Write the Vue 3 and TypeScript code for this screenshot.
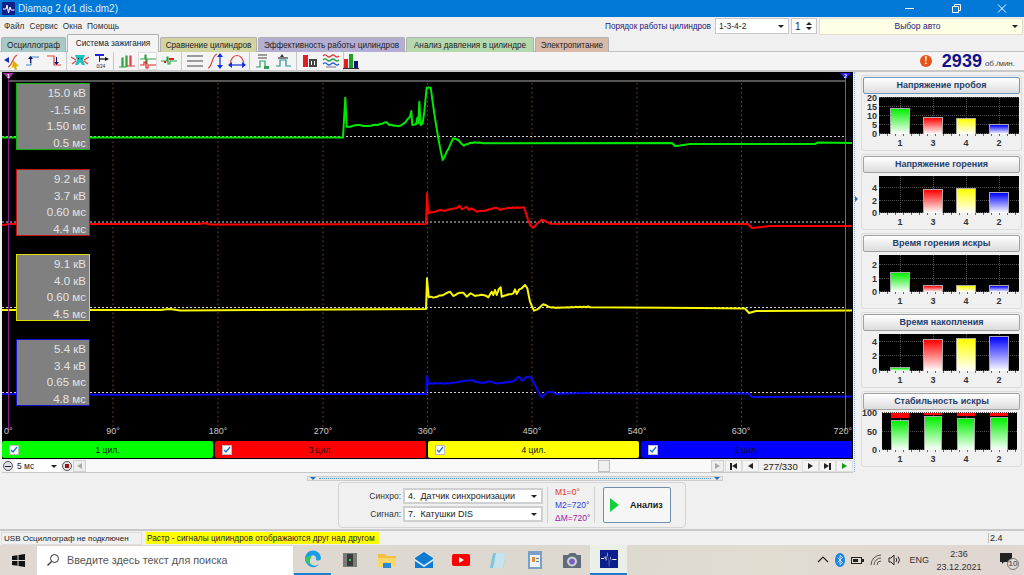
<template>
  <div class="app">
    <div class="titlebar">
      <svg class="app-icon" width="13" height="13" viewBox="0 0 13 13">
        <rect width="13" height="13" rx="1" fill="#10208a" />
        <path d="M1 7h3l1-4 1.500 8 1.500-6 1 3h3.500" fill="none" stroke="#fff" stroke-width="1" />
      </svg>
      <span class="title-text">Diamag 2 (к1 dis.dm2)</span>
      <div class="win-btns">
        <svg width="46" height="17" viewBox="0 0 46 17"><path d="M18 8.500h9" stroke="#fff" /></svg>
        <svg width="46" height="17" viewBox="0 0 46 17"><path d="M19.500 6.500h6v6h-6zM21.500 6.500v-2h6v6h-2" fill="none" stroke="#fff" /></svg>
        <svg width="46" height="17" viewBox="0 0 46 17"><path d="M19 4.500l8 8M27 4.500l-8 8" stroke="#fff" /></svg>
      </div>
    </div>

    <div class="menubar">
      <div class="menu-items">
        <span v-for="m in menu" :key="m">{{ m }}</span>
      </div>
      <span class="order-label">Порядок работы цилиндров</span>
      <div class="combo order-combo"><span>1-3-4-2</span><i class="caret"></i></div>
      <div class="combo spin-combo">
        <span>1</span>
        <div class="spin"><i class="caret up"></i><i class="caret"></i></div>
      </div>
      <div class="combo auto-combo"><span class="auto-text">Выбор авто</span><i class="caret"></i></div>
    </div>

    <div class="tabs">
      <div
        v-for="t in tabs"
        :key="t.name"
        class="tab"
        :class="{ active: t.active }"
        :style="{ background: t.color, width: t.width + 'px' }"
      >
        {{ t.name }}
      </div>
    </div>

    <div class="toolbar">
      <template v-for="(group, gi) in toolGroups" :key="gi">
        <div class="tool-group">
          <div v-for="(icon, ii) in group" :key="ii" class="tool" :class="{ pressed: icon.pressed }">
            <svg width="18" height="18" viewBox="0 0 18 18">
              <path
                v-for="(p, pi) in icon.paths"
                :key="pi"
                :d="p.d"
                :stroke="p.fill ? 'none' : p.color"
                :fill="p.fill ? p.color : 'none'"
                stroke-width="1.200"
              />
              <text v-if="icon.label" x="9" y="16" class="tool-label">{{ icon.label }}</text>
            </svg>
          </div>
        </div>
      </template>
      <div class="rpm">
        <span class="alert">!</span>
        <span class="rpm-value">2939</span>
        <span class="rpm-unit">об./мин.</span>
      </div>
    </div>

    <div class="main">
      <div class="left">
        <div class="scope">
          <svg class="scope-svg" width="851" height="369" viewBox="2 72 851 369">
            <line x1="9" y1="81" x2="845" y2="81" stroke="#a8a8a8" stroke-width="1" />
            <line
              v-for="x in gridX"
              :key="x"
              :x1="x"
              y1="83"
              :x2="x"
              y2="431"
              stroke="#8a4312"
              stroke-dasharray="1.500 3"
            />
            <line
              v-for="y in refLines"
              :key="y"
              x1="2"
              :y1="y"
              x2="846"
              :y2="y"
              stroke="#d0d0d0"
              stroke-dasharray="2 2"
            />
            <polyline
              v-for="t in traces"
              :key="t.color"
              :points="t.points"
              :stroke="t.color"
              fill="none"
              stroke-width="2"
              stroke-linejoin="round"
            />
            <line x1="8.500" y1="76" x2="8.500" y2="431" stroke="#8a1a8a" />
            <line x1="845.500" y1="76" x2="845.500" y2="431" stroke="#5a5aff" />
            <path d="M3 73h11l-5.500 6z" fill="#a030a0" />
            <path d="M840 73h11l-5.500 6z" fill="#2020ff" />
            <text x="8.500" y="77.500" class="cursor-num">1</text>
            <text x="845.500" y="77.500" class="cursor-num">2</text>
            <text
              v-for="a in axisLabels"
              :key="a.text"
              :x="a.x"
              y="434"
              class="axis-text"
              :text-anchor="a.anchor"
            >
              {{ a.text }}
            </text>
          </svg>
          <div
            v-for="b in infoBoxes"
            :key="b.top"
            class="info-box"
            :style="{ top: b.top + 'px', borderColor: b.color }"
          >
            <span v-for="l in b.lines" :key="l">{{ l }}</span>
          </div>
          <div class="strip">
            <div v-for="c in cylinders" :key="c.name" class="cyl" :style="{ background: c.color }">
              <span class="check">
                <svg width="8" height="8" viewBox="0 0 8 8"><path d="M1 4l2 2 4-5" fill="none" stroke="#1a6fd8" stroke-width="1.300" /></svg>
              </span>
              <span class="cyl-name">{{ c.name }}</span>
            </div>
          </div>
        </div>

        <div class="scrollrow">
          <span class="round-btn"><i></i></span>
          <div class="combo time-combo"><span>5 мс</span><i class="caret"></i></div>
          <span class="round-btn plus"><i></i></span>
          <span class="arrow-btn"><i class="tri left-tri grey"></i></span>
          <div class="track"><div class="thumb"></div></div>
          <span class="arrow-btn"><i class="tri right-tri grey"></i></span>
          <div class="nav">
            <span class="nav-btn"><b class="bar"></b><i class="tri left-tri"></i></span>
            <span class="nav-btn"><i class="tri left-tri"></i></span>
            <span class="counter">277/330</span>
            <span class="nav-btn"><i class="tri right-tri"></i></span>
            <span class="nav-btn"><i class="tri right-tri"></i><b class="bar"></b></span>
            <span class="nav-btn"><i class="tri right-tri green"></i></span>
          </div>
        </div>
      </div>

      <div class="vsplit"><i></i></div>

      <div class="side">
        <div v-for="c in charts" :key="c.title" class="card">
          <div class="card-head" :class="{ focus: c.focus }">{{ c.title }}</div>
          <div class="chart-row">
            <div class="y-axis">
              <span
                v-for="t in c.ticks"
                :key="t.label"
                class="y-tick"
                :style="{ bottom: t.at - 5 + 'px' }"
              >{{ t.label }}</span>
            </div>
            <div class="chart" :class="{ wide: c.stacked }">
              <div
                v-for="t in c.ticks"
                :key="t.label"
                class="h-grid"
                :style="{ bottom: t.at + 'px' }"
              ></div>
              <div v-for="b in c.bars" :key="b.label" class="bar-slot">
                <div v-if="b.top" class="bar-top" :style="{ height: b.top + 'px' }"></div>
                <div
                  v-if="b.h"
                  class="chart-bar"
                  :style="{ height: b.h + 'px', background: `linear-gradient(${b.color}, #fff)` }"
                ></div>
              </div>
            </div>
          </div>
          <div class="x-labels">
            <span v-for="b in c.bars" :key="b.label">{{ b.label }}</span>
          </div>
        </div>
      </div>
    </div>

    <div class="hsplit"><i class="down"></i><span></span><i class="down"></i></div>

    <div class="panel-zone">
      <div class="panel">
        <div class="selects">
          <div class="select-row">
            <label>Синхро:</label>
            <div class="combo sig-combo"><span>4.&nbsp; Датчик синхронизации</span><i class="caret"></i></div>
          </div>
          <div class="select-row">
            <label>Сигнал:</label>
            <div class="combo sig-combo"><span>7.&nbsp; Катушки DIS</span><i class="caret"></i></div>
          </div>
        </div>
        <div class="markers">
          <span class="m1">M1=0°</span>
          <span class="m2">M2=720°</span>
          <span class="m3">ΔM=720°</span>
        </div>
        <div class="analyze">
          <i class="play"></i>
          <span>Анализ</span>
        </div>
      </div>
    </div>

    <div class="statusbar">
      <span class="usb">USB Осциллограф не подключен</span>
      <span class="hint">Растр - сигналы цилиндров отображаются друг над другом</span>
      <span class="version">2.4</span>
    </div>

    <div class="taskbar">
      <svg class="start" width="13" height="13" viewBox="0 0 13 13">
        <path d="M0 2l5.500-.8V6H0zM6.500 1.100L13 0v6H6.500zM0 7h5.500v4.800L0 11zM6.500 7H13v6l-6.500-1z" fill="#111" />
      </svg>
      <div class="search">
        <svg width="14" height="14" viewBox="0 0 14 14">
          <circle cx="8.500" cy="5.500" r="4" fill="none" stroke="#333" />
          <path d="M5.500 8.500L1.500 12.500" stroke="#333" stroke-width="1.200" />
        </svg>
        <span>Введите здесь текст для поиска</span>
      </div>
      <div class="apps">
        <div v-for="a in taskApps" :key="a.name" class="task-app" :class="{ running: a.running, current: a.current }">
          <svg width="22" height="22" viewBox="0 0 22 22">
            <path v-for="(p, i) in a.paths" :key="i" :d="p.d" :fill="p.color" />
          </svg>
        </div>
      </div>
      <div class="tray">
        <svg width="12" height="12" viewBox="0 0 12 12"><path d="M1 8l5-5 5 5" fill="none" stroke="#222" stroke-width="1.200" /></svg>
        <svg width="10" height="14" viewBox="0 0 10 14">
          <ellipse cx="5" cy="7" rx="5" ry="7" fill="#1683e8" />
          <path d="M2.500 4.500l5 5-2.500 2v-9l2.500 2-5 5" fill="none" stroke="#fff" stroke-width=".8" />
        </svg>
        <svg width="13" height="9" viewBox="0 0 13 9">
          <rect x=".5" y="1.500" width="10" height="6" fill="none" stroke="#222" />
          <rect x="2" y="3" width="5" height="3" fill="#222" />
          <rect x="11" y="3" width="2" height="3" fill="#222" />
        </svg>
        <svg width="12" height="12" viewBox="0 0 12 12">
          <path d="M1 11a10 10 0 0 1 10-10M4 11a7 7 0 0 1 7-7M7 11a4 4 0 0 1 4-4" fill="none" stroke="#555" />
        </svg>
        <svg width="14" height="12" viewBox="0 0 14 12">
          <path d="M1 4h2l3-3v10l-3-3H1z" fill="none" stroke="#222" />
          <path d="M8 4q1.500 2 0 4M10 2.500q3 3.500 0 7" fill="none" stroke="#222" />
        </svg>
        <span class="lang">ENG</span>
        <div class="clock"><span>2:36</span><span>23.12.2021</span></div>
        <div class="notify">
          <svg width="14" height="14" viewBox="0 0 14 14">
            <path d="M1 1h12v9H5l-2 2v-2H1z" fill="#222" />
          </svg>
          <span class="notify-count">10</span>
        </div>
      </div>
    </div>
  </div>
</template>

<script setup lang="ts">
interface IconPath { d: string; color: string; fill?: boolean }
interface ToolIcon { paths: IconPath[]; label?: string; pressed?: boolean }

const menu = ['Файл', 'Сервис', 'Окна', 'Помощь']

const tabs = [
  { name: 'Осциллограф', color: '#a9c9c6', width: 65 },
  { name: 'Система зажигания', color: '#f4f4f4', width: 92, active: true },
  { name: 'Сравнение цилиндров', color: '#d3d3a0', width: 97 },
  { name: 'Эффективность работы цилиндров', color: '#b5aed3', width: 147 },
  { name: 'Анализ давления в цилиндре', color: '#b5d8ae', width: 128 },
  { name: 'Электропитание', color: '#d9b9a8', width: 74 }
]

const s = (d: string, color: string): IconPath => ({ d, color })
const f = (d: string, color: string): IconPath => ({ d, color, fill: true })

const toolGroups: ToolIcon[][] = [
  [
    { paths: [s('M5 15C9 14 9 6 14 3', '#e04040'), f('M1 8l5-3v6z', '#1030c0'), f('M10 8l6 6-3 .5 1 3-2 .5-1-3-2 1z', '#e0b000')] },
    { paths: [s('M2 13h5V5h8', '#3a8ad0'), f('M4 7l2.500-3L9 7H7v4H6V7z', '#101060')] },
    { paths: [s('M2 4h7v9h7', '#e84040'), f('M11 10V5h1v5h2l-2.500 3L9 10z', '#101080')] }
  ],
  [
    { paths: [f('M4 3h10l-2 5 2 5h-3l-2-3-2 3H4l2-5z', '#20c0c0'), s('M0 5l5 3M18 5l-5 3M1 12l4-3M17 12l-4-3', '#e04040'), f('M7 6h1v1H7zM10 6h1v1h-1z', '#111')] },
    { paths: [f('M3 2h9v2H8v6H7V4H3z', '#2020d0'), s('M7 7h7', '#111'), f('M13 5l4 2-4 2z', '#111')], label: '0/24' }
  ],
  [
    { paths: [s('M1 15h3V6h1v9h3V4h1v11', '#30a040'), s('M9 14h3V4h1v10h4', '#e04040')] },
    { paths: [s('M1 7h5V3h1v9h1V7h9', '#30a040'), s('M1 13h4v-3h2v6h2v-3h8', '#e02020')], pressed: true },
    { paths: [s('M1 9h6V5h1v7h2V9h7', '#30a040'), f('M9 6h5v2H9zM4 9h2v2H4z', '#e02020')] }
  ],
  [
    { paths: [s('M1 4h16M1 9h16M1 14h16', '#444')] },
    { paths: [s('M1 16C5 16 5 3 10 2', '#e04040'), s('M13 4v10', '#1030e0'), f('M13 1l3 4h-6zM13 17l3-4h-6z', '#1030e0')] },
    { paths: [s('M2 14C2 0 16 0 16 14', '#e04040'), s('M3 13h12', '#1030e0'), f('M0 13l4-3v6zM18 13l-4-3v6z', '#1030e0')] }
  ],
  [
    { paths: [s('M2 15h4V9h5v6h3', '#30a060'), s('M4 3h9M4 6h9', '#444'), f('M10 14h5v3h-5z', '#30a060')] },
    { paths: [s('M1 14h4V8h6v6h5', '#209090'), s('M3 6h10', '#333'), f('M7 2l2 3H5z', '#333')] }
  ],
  [
    { paths: [f('M2 3h5v12H2z', '#e02020'), f('M8 7h8v8H8z', '#444'), f('M10 9h1v4h-1zM13 9h1v4h-1z', '#fff')] },
    { paths: [s('M1 4q2-2 4 0t4 0 4 0 4 0', '#e04040'), s('M1 8q2-2 4 0t4 0 4 0 4 0', '#20a040'), s('M1 12q2-2 4 0t4 0 4 0 4 0', '#3060e0'), s('M4 15h10', '#888')] }
  ],
  [
    { paths: [f('M2 7h4v9H2z', '#e02020'), f('M7 2h4v14H7z', '#20a020'), f('M12 9h4v7h-4z', '#101080'), s('M1 16.500h16', '#333')] }
  ]
]

const gridX = [113, 218, 323, 427.5, 532, 637, 741.5]
const refLines = [136.5, 222, 307.5, 392.5]

const axisLabels = [
  { text: '0°', x: 4, anchor: 'start' },
  { text: '90°', x: 113, anchor: 'middle' },
  { text: '180°', x: 218, anchor: 'middle' },
  { text: '270°', x: 323, anchor: 'middle' },
  { text: '360°', x: 427, anchor: 'middle' },
  { text: '450°', x: 532, anchor: 'middle' },
  { text: '540°', x: 637, anchor: 'middle' },
  { text: '630°', x: 741, anchor: 'middle' },
  { text: '720°', x: 852, anchor: 'end' }
]

// coordinates read off the 3x zoom crops, converted back to page pixels,
// long segments get a bit of signal noise so they don't look ruled
function fromZoom(ox: number, oy: number, raw: number[][]) {
  const out: number[][] = []
  raw.forEach(([x, y], i) => {
    const px = ox + x / 3
    const py = oy + y / 3
    if (i > 0) {
      const qx = ox + raw[i - 1][0] / 3
      const qy = oy + raw[i - 1][1] / 3
      const steps = Math.floor((px - qx) / 2)
      for (let k = 1; k < steps; k++) {
        const t = k / steps
        const nx = qx + (px - qx) * t
        out.push([nx, qy + (py - qy) * t + Math.sin(nx * 2.3) * Math.cos(nx * 0.7) * 0.8])
      }
    }
    out.push([px, py])
  })
  return out
}

function toPoints(list: number[][]) {
  return list.map(([x, y]) => `${x.toFixed(1)},${y.toFixed(1)}`).join(' ')
}

const green = [
  [2, 137.5], [343, 137.5],
  ...fromZoom(330, 75, [
    [46, 68], [50, 155], [60, 155], [75, 151], [90, 150], [100, 153], [115, 153], [130, 150], [150, 147],
    [170, 142], [178, 150], [190, 152], [205, 154], [225, 143], [240, 125], [244, 108], [247, 150], [258, 148],
    [262, 128], [265, 145], [268, 80], [272, 150], [278, 145], [283, 110], [290, 38], [302, 38], [312, 110],
    [325, 190], [338, 255], [350, 230], [370, 190], [385, 195], [402, 212], [420, 203], [440, 203], [460, 205]
  ]),
  [672, 143], [675, 146], [680, 145.5], [690, 144], [815, 144], [818, 142.5], [852, 143]
]

const red = [
  [2, 225], [10, 224], [200, 224], [204, 223], [210, 224.5], [426, 224],
  ...fromZoom(330, 75, [
    [291, 355], [295, 415], [315, 410], [330, 405], [345, 408], [360, 403], [380, 400], [388, 392], [395, 403],
    [410, 395], [417, 405], [425, 400], [440, 410], [465, 407], [490, 400], [500, 398], [510, 405], [530, 400],
    [550, 397], [582, 397], [600, 450], [610, 458], [635, 434], [660, 446]
  ]),
  [600, 224], [748, 224], [752, 228], [770, 226], [852, 226]
]

const yellow = [
  [2, 310], [160, 310], [170, 309], [180, 310.5], [426, 309],
  ...fromZoom(410, 270, [
    [51, 25], [56, 82], [75, 82], [100, 75], [120, 65], [130, 78], [150, 68], [160, 68], [170, 80], [182, 70],
    [195, 78], [220, 75], [235, 82], [245, 65], [250, 75], [255, 60], [260, 75], [266, 58], [272, 52], [275, 80],
    [290, 75], [310, 70], [315, 58], [320, 72], [328, 58], [335, 55], [345, 45], [352, 55], [360, 95], [372, 122],
    [382, 118], [400, 103], [415, 110], [430, 112], [540, 112]
  ]),
  [700, 308], [745, 308.5], [749, 313], [756, 311], [852, 310.5]
]

const blue = [
  [2, 394], [150, 395], [300, 394], [426, 394],
  ...fromZoom(410, 270, [
    [51, 318], [55, 342], [90, 340], [130, 338], [160, 332], [185, 330], [210, 338], [245, 335], [255, 340],
    [310, 333], [328, 320], [335, 332], [340, 330], [350, 320], [365, 325], [380, 355], [395, 382], [415, 365],
    [440, 372], [540, 370]
  ]),
  [748, 393.5], [752, 397], [852, 396.5]
]

const traces = [
  { color: '#00e800', points: toPoints(green) },
  { color: '#ff0000', points: toPoints(red) },
  { color: '#f8f800', points: toPoints(yellow) },
  { color: '#0808f0', points: toPoints(blue) }
]

const infoBoxes = [
  { top: 11, color: '#10b010', lines: ['15.0 кВ', '-1.5 кВ', '1.50 мс', '0.5 мс'] },
  { top: 97, color: '#c81010', lines: ['9.2 кВ', '3.7 кВ', '0.60 мс', '4.4 мс'] },
  { top: 182, color: '#e0e000', lines: ['9.1 кВ', '4.0 кВ', '0.60 мс', '4.5 мс'] },
  { top: 267, color: '#1010d0', lines: ['5.4 кВ', '3.4 кВ', '0.65 мс', '4.8 мс'] }
]

const cylinders = [
  { name: '1 цил.', color: '#00ff00' },
  { name: '3 цил.', color: '#ff0000' },
  { name: '4 цил.', color: '#ffff00' },
  { name: '2 цил.', color: '#0000ff' }
]

const G = '#00f000'
const R = '#ff0000'
const Y = '#ffff00'
const B = '#0000ff'

const charts = [
  {
    title: 'Напряжение пробоя',
    focus: true,
    ticks: [{ label: '20', at: 36 }, { label: '15', at: 27 }, { label: '10', at: 18 }, { label: '5', at: 9 }, { label: '0', at: 0 }],
    bars: [
      { label: '1', h: 26, color: G }, { label: '3', h: 17, color: R },
      { label: '4', h: 16, color: Y }, { label: '2', h: 10, color: B }
    ]
  },
  {
    title: 'Напряжение горения',
    ticks: [{ label: '4', at: 25 }, { label: '2', at: 12 }, { label: '0', at: 0 }],
    bars: [
      { label: '1', h: 0, color: G }, { label: '3', h: 24, color: R },
      { label: '4', h: 25, color: Y }, { label: '2', h: 21, color: B }
    ]
  },
  {
    title: 'Время горения искры',
    ticks: [{ label: '2', at: 27 }, { label: '1', at: 13 }, { label: '0', at: 0 }],
    bars: [
      { label: '1', h: 20, color: G }, { label: '3', h: 7, color: R },
      { label: '4', h: 7, color: Y }, { label: '2', h: 7, color: B }
    ]
  },
  {
    title: 'Время накопления',
    ticks: [{ label: '4', at: 29 }, { label: '2', at: 15 }, { label: '0', at: 0 }],
    bars: [
      { label: '1', h: 4, color: G }, { label: '3', h: 32, color: R },
      { label: '4', h: 33, color: Y }, { label: '2', h: 35, color: B }
    ]
  },
  {
    title: 'Стабильность искры',
    stacked: true,
    ticks: [{ label: '100', at: 37 }, { label: '50', at: 18 }, { label: '0', at: 0 }],
    bars: [
      { label: '1', h: 30, top: 5, color: G }, { label: '3', h: 34, top: 2, color: G },
      { label: '4', h: 32, top: 3, color: G }, { label: '2', h: 33, top: 3, color: G }
    ]
  }
]

const taskApps = [
  {
    name: 'edge', running: true,
    paths: [
      { d: 'M3 11a8 8 0 0 1 16-1c0 3-4 3-5 2 1-3-2-6-5-4-3 2-3 7 1 9 2 1 5 1 7-1-2 4-8 4-11 1-2-2-3-4-3-6z', color: '#1b9de2' },
      { d: 'M3 11c1-3 5-4 7-2-2 1-3 4-1 8-3-1-6-3-6-6z', color: '#36c46b' }
    ]
  },
  {
    name: 'chip',
    paths: [
      { d: 'M4 4h14v14H4z', color: '#7a7a76' },
      { d: 'M8 5h6v12H8z', color: '#3a3a38' },
      { d: 'M10 10h2v2h-2z', color: '#40c060' }
    ]
  },
  {
    name: 'folder',
    paths: [
      { d: 'M2 5h7l2 2h9v4H2z', color: '#f0c040' },
      { d: 'M2 9h18v9H2z', color: '#f8d768' },
      { d: 'M7 14h8v5H7z', color: '#2b88d8' }
    ]
  },
  {
    name: 'mail',
    paths: [
      { d: 'M2 9l9-6 9 6v10H2z', color: '#0f7ad0' },
      { d: 'M2 10l9 6 9-6v2l-9 6-9-6z', color: '#d8eefc' }
    ]
  },
  {
    name: 'youtube',
    paths: [
      { d: 'M4 5h14a2 2 0 0 1 2 2v8a2 2 0 0 1-2 2H4a2 2 0 0 1-2-2V7a2 2 0 0 1 2-2z', color: '#f00' },
      { d: 'M9 8l5 3-5 3z', color: '#fff' }
    ]
  },
  {
    name: 'notepad',
    paths: [
      { d: 'M6 4h13l-3 15H3z', color: '#7fc4d8' },
      { d: 'M9 4h10l-3 15H6z', color: '#c6e2ea' }
    ]
  },
  {
    name: 'paint',
    paths: [
      { d: 'M4 2h14v18H4z', color: '#7ba0c8' },
      { d: 'M6 6h10v12H6z', color: '#f0f4f8' },
      { d: 'M8 8h3v5H8z', color: '#e09030' },
      { d: 'M12 9h3v1h-3zM12 12h3v1h-3z', color: '#5080b0' }
    ]
  },
  {
    name: 'camera',
    paths: [
      { d: 'M2 6h5l2-2h5l2 2h4v13H2z', color: '#5f6b76' },
      { d: 'M11 7.500a5 5 0 1 0 .01 0z', color: '#c7d0d8' },
      { d: 'M11 9.500a3 3 0 1 0 .01 0z', color: '#7d5fc0' }
    ]
  },
  {
    name: 'diamag', running: true, current: true,
    paths: [
      { d: 'M2 2h18v18H2z', color: '#0c1f8c' },
      { d: 'M3 11h3l1-3 1 5 1.500-9 1.500 14 1.500-10 1 5 1-2h4v1h-4.500l-.5 1-1-3-1.500 9-1.500-13-1 7-1-5-.5 2H3z', color: '#fff' }
    ]
  }
]
</script>

<style>
html,
body {
  margin: 0;
  background: #f0f0f0;
  overflow: hidden;
}
</style>

<style scoped>
.app {
  width: 1024px;
  height: 575px;
  display: flex;
  flex-direction: column;
  background: #f0f0f0;
  overflow: hidden;
  font-family: "Liberation Sans", Arial, sans-serif;
  font-size: 8.5px;
  color: #222;
}

i {
  display: block;
}

.titlebar {
  height: 17px;
  flex: none;
  display: flex;
  align-items: center;
  padding-left: 2px;
  background: #0078d7;
  color: #dbeefa;
  font-size: 10px;
}

.app-icon {
  margin-right: 3px;
}

.win-btns {
  margin-left: auto;
  display: flex;
  margin-right: -1px;
}

.menubar {
  height: 18px;
  flex: none;
  display: flex;
  align-items: center;
}

.menu-items {
  display: flex;
  gap: 5px;
  padding-left: 4px;
  width: 605px;
  box-sizing: border-box;
  color: #303030;
  font-size: 8.3px;
}

.order-label {
  width: 110px;
  color: #202080;
  font-size: 8.2px;
  white-space: nowrap;
}

.combo {
  display: flex;
  align-items: center;
  justify-content: space-between;
  box-sizing: border-box;
  background: #fff;
  border: 1px solid #c8c8c8;
  padding: 0 4px 0 3px;
  color: #222;
}

.caret {
  width: 0;
  height: 0;
  border-left: 3px solid transparent;
  border-right: 3px solid transparent;
  border-top: 3px solid #222;
}

.caret.up {
  border-top: 0;
  border-bottom: 3px solid #222;
  margin-bottom: 2px;
}

.order-combo {
  width: 74px;
  height: 16px;
}

.spin-combo {
  width: 26px;
  height: 16px;
  margin-left: 2px;
  font-size: 10px;
}

.auto-combo {
  width: 204px;
  height: 17px;
  margin-left: 2px;
  background: #ffffe6;
  border-color: #e0e0d0;
}

.auto-text {
  flex: 1;
  text-align: center;
  color: #202080;
}

.tabs {
  height: 17px;
  flex: none;
  display: flex;
  align-items: flex-end;
  gap: 1px;
  padding-left: 1px;
  box-sizing: border-box;
  border-bottom: 1px solid #c0c0c0;
}

.tab {
  height: 15px;
  margin-bottom: -1px;
  box-sizing: border-box;
  border: 1px solid #b0b0b0;
  border-bottom: 0;
  border-radius: 2px 2px 0 0;
  display: flex;
  align-items: center;
  justify-content: center;
  white-space: nowrap;
  color: #222;
  font-size: 8.2px;
}

.tab.active {
  height: 18px;
  position: relative;
}

.toolbar {
  height: 20px;
  flex: none;
  display: flex;
  align-items: center;
  padding-left: 2px;
  box-sizing: border-box;
  background: #f4f4f4;
  border-bottom: 2px solid #c8c8c8;
}

.tool-group {
  display: flex;
  gap: 2px;
  padding-right: 3px;
  margin-right: 3px;
  border-right: 1px solid #c8c8c8;
}

.tool-group:nth-child(7) {
  margin-left: -6px;
  border-right: 0;
}

.tool {
  width: 19px;
  height: 18px;
  display: flex;
  align-items: center;
  justify-content: center;
}

.tool.pressed {
  background: #fff;
  box-shadow: inset 0 0 0 1px #ddd;
}

.tool-label {
  font-size: 4.500px;
  text-anchor: middle;
  fill: #222;
}

.rpm {
  margin-left: auto;
  display: flex;
  align-items: center;
  padding-right: 9px;
}

.alert {
  width: 12px;
  height: 12px;
  border-radius: 50%;
  background: #e8501c;
  color: #fff;
  font-weight: 700;
  font-size: 10px;
  line-height: 12px;
  text-align: center;
}

.rpm-value {
  margin-left: 10px;
  font-size: 18px;
  font-weight: 700;
  color: #10108a;
}

.rpm-unit {
  margin-left: 3px;
  font-size: 8px;
  padding-top: 4px;
  color: #444;
}

.main {
  height: 400px;
  flex: none;
  display: flex;
}

.left {
  width: 853px;
  padding-left: 2px;
  box-sizing: border-box;
}

.scope {
  position: relative;
  background: #000;
  width: 851px;
  height: 387px;
}

.scope-svg {
  display: block;
}

.axis-text {
  font-size: 9px;
  fill: #c8c8c8;
}

.cursor-num {
  font-size: 5px;
  font-weight: 700;
  fill: #fff;
  text-anchor: middle;
}

.info-box {
  position: absolute;
  left: 14px;
  width: 74px;
  height: 67px;
  box-sizing: border-box;
  border: 1px solid;
  background: #808080;
  display: flex;
  flex-direction: column;
  align-items: flex-end;
  padding: 1px 3px;
  color: #e4e4e4;
  font-size: 11.500px;
  line-height: 16.500px;
}

.strip {
  display: flex;
  gap: 2px;
  height: 17px;
  padding-bottom: 1px;
}

.cyl {
  width: 211px;
  height: 17px;
  display: flex;
  align-items: center;
  position: relative;
  border-radius: 2px;
}

.check {
  margin-left: 7px;
  width: 10px;
  height: 10px;
  background: #fff;
  border: 1px solid #bbb;
  box-sizing: border-box;
  display: flex;
  align-items: center;
  justify-content: center;
}

.cyl-name {
  position: absolute;
  left: 0;
  right: 0;
  text-align: center;
  color: #111;
}

.scrollrow {
  height: 12px;
  margin-top: 1px;
  display: flex;
  align-items: center;
  border-bottom: 1px solid #c8c8c8;
}

.round-btn {
  width: 10px;
  height: 10px;
  margin: 0 1px;
  border: 1px solid #555;
  border-radius: 50%;
  box-sizing: border-box;
  display: flex;
  align-items: center;
  justify-content: center;
  background: #e0e0e8;
}

.round-btn i {
  width: 6px;
  height: 1px;
  background: #222;
}

.round-btn.plus i {
  width: 4px;
  height: 4px;
  background: #a01010;
}

.time-combo {
  width: 47px;
  height: 12px;
  border: 0;
}

.arrow-btn {
  width: 13px;
  height: 12px;
  box-sizing: border-box;
  border: 1px solid #d0d0d0;
  background: #eee;
  display: flex;
  align-items: center;
  justify-content: center;
}

.tri {
  width: 0;
  height: 0;
  border-top: 3.500px solid transparent;
  border-bottom: 3.500px solid transparent;
}

.left-tri {
  border-right: 5px solid #222;
}

.right-tri {
  border-left: 5px solid #222;
}

.left-tri.grey {
  border-right-color: #aaa;
}

.right-tri.grey {
  border-left-color: #aaa;
}

.right-tri.green {
  border-left-color: #10a010;
}

.track {
  flex: 1;
  height: 12px;
  background: #f9f9f9;
  position: relative;
}

.thumb {
  position: absolute;
  left: 512px;
  top: 0;
  width: 12px;
  height: 12px;
  box-sizing: border-box;
  background: #f0f0f0;
  border: 1px solid #c0c0c0;
}

.nav {
  display: flex;
  align-items: center;
  margin-left: 1px;
}

.nav-btn {
  width: 17px;
  height: 12px;
  box-sizing: border-box;
  background: #f4f4f4;
  border: 1px solid #ddd;
  display: flex;
  align-items: center;
  justify-content: center;
}

.bar {
  width: 1.500px;
  height: 7px;
  background: #222;
}

.counter {
  width: 43px;
  text-align: center;
  font-size: 9.500px;
  color: #222;
}

.vsplit {
  width: 7px;
  position: relative;
  border-left: 1px dotted #80b0e0;
  box-sizing: border-box;
  margin-left: 1px;
}

.vsplit i {
  position: absolute;
  left: 0;
  top: 124px;
  width: 0;
  height: 0;
  border-top: 3px solid transparent;
  border-bottom: 3px solid transparent;
  border-left: 3px solid #2070c0;
}

.side {
  width: 163px;
  padding-top: 3px;
  display: flex;
  flex-direction: column;
  gap: 3px;
}

.card {
  width: 161px;
  height: 76px;
  box-sizing: border-box;
  border: 1px solid #dcdcdc;
  border-radius: 3px;
  padding: 1px;
}

.card-head {
  height: 17px;
  box-sizing: border-box;
  border: 1px solid #a0a0a0;
  border-radius: 2px;
  background: linear-gradient(#fff, #dcdcdc);
  text-align: center;
  line-height: 15px;
  font-weight: 700;
  font-size: 9px;
  color: #1f3f70;
}

.card-head.focus {
  border-color: #6f98bd;
}

.chart-row {
  display: flex;
  margin-top: 3px;
  height: 37px;
}

.y-axis {
  width: 16px;
  position: relative;
}

.y-tick {
  position: absolute;
  right: 2px;
  line-height: 10px;
  font-size: 9px;
  font-weight: 700;
  color: #333;
}

.chart {
  width: 140px;
  height: 37px;
  background: #000;
  display: flex;
  align-items: flex-end;
  padding: 0 3.500px 0 4.500px;
  box-sizing: border-box;
  position: relative;
}

.chart.wide {
  width: 135px;
  margin-left: 3px;
  padding: 0 0 0 1px;
}

.chart.wide .chart-bar,
.chart.wide .bar-top {
  width: 18px;
}

.h-grid {
  position: absolute;
  left: 0;
  right: 0;
  border-top: 1px dotted #505050;
}

.bar-slot {
  width: 33px;
  height: 100%;
  display: flex;
  flex-direction: column;
  justify-content: flex-end;
  align-items: center;
  position: relative;
}

.bar-slot::before {
  content: "";
  position: absolute;
  top: 0;
  bottom: 0;
  left: 50%;
  border-left: 1px dotted #505050;
}

.chart-bar {
  width: 20px;
  box-sizing: border-box;
  border: 1px solid #aaa;
  border-bottom: 0;
  position: relative;
}

.bar-top {
  width: 20px;
  background: #ff0000;
  margin-bottom: auto;
  position: relative;
}

.x-labels {
  display: flex;
  margin-top: 4px;
  padding-left: 20.500px;
  font-weight: 700;
  font-size: 9px;
  color: #333;
  position: relative;
}

.x-labels::before {
  content: "";
  position: absolute;
  top: -4px;
  left: 16px;
  width: 140px;
  height: 2px;
  background: repeating-linear-gradient(90deg, #666 0 1px, transparent 1px 8px);
}

.x-labels span {
  width: 33px;
  text-align: center;
}

.hsplit {
  height: 3px;
  margin: 4px 0 0 307px;
  width: 410px;
  display: flex;
  align-items: center;
  justify-content: space-between;
  background: #e8e8e8;
  border: 1px solid #ccc;
  box-sizing: content-box;
  padding: 0 2px;
}

.hsplit span {
  flex: 1;
  margin: 0 3px;
  border-top: 1px dotted #4a90d0;
}

.down {
  width: 0;
  height: 0;
  border-left: 3px solid transparent;
  border-right: 3px solid transparent;
  border-top: 3px solid #2070c0;
}

.panel-zone {
  height: 50px;
  flex: none;
  padding: 1px 0 0 338px;
  box-sizing: border-box;
  border-bottom: 2px solid #c8c8c8;
}

.panel {
  width: 348px;
  height: 46px;
  box-sizing: border-box;
  border: 1px solid #d4d4d4;
  border-radius: 4px;
  display: flex;
  align-items: center;
}

.selects {
  width: 208px;
  display: flex;
  flex-direction: column;
  gap: 2px;
  border-right: 1px solid #d0d0d0;
  height: 36px;
  justify-content: center;
}

.select-row {
  display: flex;
  align-items: center;
}

.select-row label {
  width: 62px;
  text-align: right;
  margin-right: 2px;
  color: #333;
}

.sig-combo {
  width: 140px;
  height: 16px;
  border: 2px solid #d0d0d0;
  font-size: 9px;
}

.markers {
  width: 47px;
  height: 36px;
  border-right: 1px solid #d0d0d0;
  padding-left: 7px;
  box-sizing: border-box;
  display: flex;
  flex-direction: column;
  justify-content: space-between;
  font-size: 8.500px;
}

.m1 {
  color: #e83030;
}

.m2 {
  color: #3040e0;
}

.m3 {
  color: #a020a0;
}

.analyze {
  margin-left: 8px;
  width: 68px;
  height: 36px;
  box-sizing: border-box;
  border: 1px solid #6f8fad;
  border-radius: 2px;
  display: flex;
  align-items: center;
  padding-left: 6px;
  background: #f6f6f6;
  font-weight: 700;
  font-size: 9px;
}

.play {
  width: 0;
  height: 0;
  border-top: 7.500px solid transparent;
  border-bottom: 7.500px solid transparent;
  border-left: 9px solid #10d040;
  margin-right: 11px;
}

.statusbar {
  height: 14px;
  flex: none;
  display: flex;
  align-items: center;
}

.usb {
  width: 141px;
  margin-left: 1px;
  padding-left: 2px;
  box-sizing: border-box;
  border: 1px solid #ddd;
  height: 13px;
  line-height: 11px;
  font-size: 8.050px;
  white-space: nowrap;
}

.hint {
  margin-left: 4px;
  width: 233px;
  background: #ffff00;
  padding-left: 1px;
  box-sizing: border-box;
  height: 12px;
  line-height: 12px;
  white-space: nowrap;
  font-size: 8.300px;
}

.version {
  margin-left: auto;
  width: 36px;
  box-sizing: border-box;
  border-left: 1px solid #bbb;
  padding-left: 1px;
  font-size: 9px;
}

.taskbar {
  flex: 1;
  display: flex;
  align-items: center;
  background: linear-gradient(90deg, #e0d8d2, #dcd8d0 50%, #e0dcd0 75%, #e0d6d2);
}

.start {
  margin-left: 12px;
}

.search {
  margin-left: 12px;
  width: 256px;
  height: 29px;
  background: #fff;
  display: flex;
  align-items: center;
  padding-left: 9px;
  box-sizing: border-box;
  font-size: 10.800px;
  color: #555;
}

.search span {
  margin-left: 7px;
}

.apps {
  margin-left: 1px;
  display: flex;
}

.task-app {
  width: 37px;
  height: 30px;
  box-sizing: border-box;
  display: flex;
  align-items: center;
  justify-content: center;
}

.task-app.running {
  border-bottom: 2px solid #1a7fd0;
}

.task-app.current {
  background: #ecefe8;
}

.tray {
  margin-left: auto;
  display: flex;
  align-items: center;
  gap: 6px;
  padding-right: 9px;
  color: #333;
}

.lang {
  font-size: 9px;
  margin-left: 1px;
}

.clock {
  display: flex;
  flex-direction: column;
  align-items: center;
  gap: 3px;
  width: 46px;
  margin-left: 1px;
  font-size: 9px;
}

.notify {
  position: relative;
  width: 16px;
  height: 16px;
  margin-left: 11px;
}

.notify-count {
  position: absolute;
  right: -4px;
  bottom: -2px;
  width: 12px;
  height: 12px;
  border: 1px solid #777;
  border-radius: 50%;
  box-sizing: border-box;
  background: #e0dcd4;
  font-size: 8px;
  line-height: 10px;
  text-align: center;
}
</style>
